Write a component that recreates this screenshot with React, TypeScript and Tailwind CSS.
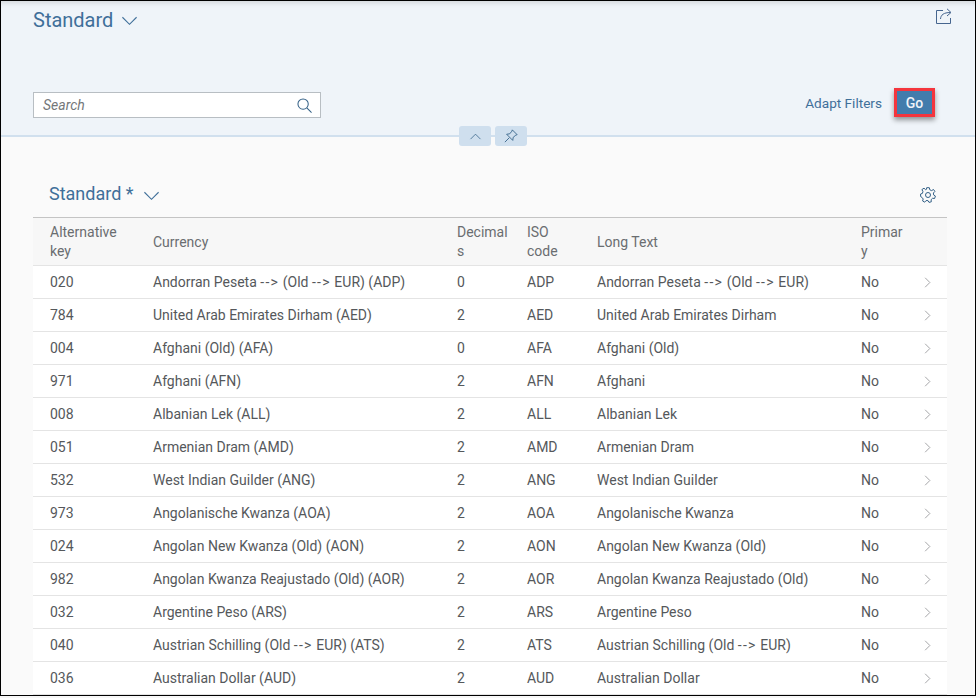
import { Fragment } from "react";

const rows = [
  ["020", "Andorran Peseta --> (Old --> EUR) (ADP)", "0", "ADP", "Andorran Peseta --> (Old --> EUR)"],
  ["784", "United Arab Emirates Dirham (AED)", "2", "AED", "United Arab Emirates Dirham"],
  ["004", "Afghani (Old) (AFA)", "0", "AFA", "Afghani (Old)"],
  ["971", "Afghani (AFN)", "2", "AFN", "Afghani"],
  ["008", "Albanian Lek (ALL)", "2", "ALL", "Albanian Lek"],
  ["051", "Armenian Dram (AMD)", "2", "AMD", "Armenian Dram"],
  ["532", "West Indian Guilder (ANG)", "2", "ANG", "West Indian Guilder"],
  ["973", "Angolanische Kwanza (AOA)", "2", "AOA", "Angolanische Kwanza"],
  ["024", "Angolan New Kwanza (Old) (AON)", "2", "AON", "Angolan New Kwanza (Old)"],
  ["982", "Angolan Kwanza Reajustado (Old) (AOR)", "2", "AOR", "Angolan Kwanza Reajustado (Old)"],
  ["032", "Argentine Peso (ARS)", "2", "ARS", "Argentine Peso"],
  ["040", "Austrian Schilling (Old --> EUR) (ATS)", "2", "ATS", "Austrian Schilling (Old --> EUR)"],
  ["036", "Australian Dollar (AUD)", "2", "AUD", "Australian Dollar"],
];

const gridCols = "grid grid-cols-[103px_304px_70px_70px_264px_58px_1fr] pl-[17px]";

const Chevron = ({ className }: { className: string }) => (
  <svg viewBox="0 0 20 12" fill="none" stroke="currentColor" strokeWidth="1.3" className={className}>
    <path d="M1.5 1.5 L10 10 L18.5 1.5" />
  </svg>
);

// the arrows run wider in the original font
const CellText = ({ text }: { text: string }) => (
  <>
    {text.split("-->").map((part, i) => (
      <Fragment key={i}>
        {i > 0 && <span className="tracking-[1.3px]">{"-->"}</span>}
        {part}
      </Fragment>
    ))}
  </>
);

const App = () => (
  <div className="h-[698px] w-[980px] overflow-hidden bg-[#f7f7f7] font-['Roboto',sans-serif]">
    <div className="relative flex h-[696px] w-[976px] flex-col overflow-hidden border border-black bg-[#fafafa]">
      <header className="flex h-[136px] shrink-0 flex-col justify-between border-b-2 border-[#d1e0ee] bg-[#eff4f9] pb-[17px] pl-8 pr-10 shadow-[inset_0_6px_5px_-4px_rgba(0,0,0,0.12)]">
        <div className="flex items-start justify-between">
          <div className="mt-[6px] flex items-center gap-2 text-[#3f6f99]">
            <span className="text-[20px] leading-[26px]">Standard</span>
            <Chevron className="mt-[1px] h-[10px] w-[17px]" />
          </div>
          <svg viewBox="0 0 16 16" fill="none" stroke="#46658f" strokeWidth="1" className="mr-[-17px] mt-[7px] h-4 w-4">
            <path d="M7 2.5 H0.5 V15.5 H14.5 V10" />
            <path d="M4.5 11 C4.8 7 7.5 4.5 14.5 4.5" />
            <path d="M11 0.8 L15 4.5 L11 8" />
          </svg>
        </div>
        <div className="flex items-end justify-between">
          <div className="flex h-[26px] w-[288px] items-center justify-between border border-[#b8bec3] bg-white pl-[9px] pr-[8px]">
            <span className="text-[14px] italic text-[#74777a]">Search</span>
            <svg viewBox="0 0 16 16" fill="none" stroke="#346187" strokeWidth="1.1" className="h-[15px] w-[15px]">
              <circle cx="6.5" cy="6.5" r="5.5" />
              <path d="M10.5 10.5 L15.5 15.5" />
            </svg>
          </div>
          <div className="mb-[1px] flex items-center gap-[12px]">
            <span className="pt-[1px] text-[13.6px] text-[#3f6f99]">Adapt Filters</span>
            <button className="flex h-[29px] w-[41px] items-center justify-center border-[3px] border-[#f4353d] bg-[#427cac] pt-[1px] text-[14px] font-medium text-[#f0f4f8] shadow-[0_3px_5px_rgba(0,0,0,0.4)]">
              Go
            </button>
          </div>
        </div>
      </header>

      <div className="absolute left-[458px] top-[125px] flex gap-[4px]">
        <div className="flex h-[20px] w-[32px] items-center justify-center rounded-[3px] bg-[#cfdfee]">
          <Chevron className="h-[7px] w-[13px] rotate-180 text-[#346187]" />
        </div>
        <div className="flex h-[20px] w-[32px] items-center justify-center rounded-[3px] bg-[#cfdfee]">
          <svg viewBox="0 0 16 16" fill="none" stroke="#346187" strokeWidth="1" className="h-[14px] w-[14px]">
            <path d="M9.5 1 L15 6.5 L13.5 7 L10.5 9.5 L10 13 L3 6 L6.5 5.5 L9 2.5 Z" />
            <path d="M6 10 L1 15" />
          </svg>
        </div>
      </div>

      <main className="flex min-h-0 flex-1 flex-col pl-8 pr-[28px]">
        <div className="flex h-[80px] shrink-0 items-end justify-between pb-[11px] pl-[16px] pr-[11px]">
          <div className="flex items-center gap-[9px] text-[#3f6f99]">
            <span className="text-[18px] leading-[24px]">Standard *</span>
            <Chevron className="mt-[3px] h-[10px] w-[17px]" />
          </div>
          <svg viewBox="0 0 16 16" fill="none" stroke="#346187" strokeWidth="1" className="mb-[3px] h-[16px] w-[16px]">
            <circle cx="8" cy="8" r="2.5" />
            <path d="M6.7 0.7 H9.3 L9.8 2.8 L11.6 3.6 L13.5 2.5 L14.9 4.4 L13.4 6 L13.6 7.9 L15.4 9 L14.6 11.5 L12.5 11.3 L11.1 12.7 L11.3 14.8 L9 15.4 L8 13.6 L6 13.6 L4.7 15.2 L2.6 14 L3.2 12 L2.1 10.5 L0.6 9.5 L0.6 7 L2.5 6.3 L2.9 4.4 L1.9 2.6 L4 1.2 L5.6 2.7 L6.4 2.4 Z" />
          </svg>
        </div>

        <div className={`${gridCols} h-[49px] shrink-0 items-center border-y border-t-[#c4c4c4] border-b-[#e4e4e4] bg-[#f7f7f7] pt-[1px] text-[14px] leading-[19px] text-[#6a6d70]`}>
          <div className="w-[80px]">Alternative key</div>
          <div>Currency</div>
          <div className="w-[52px] break-all">Decimals</div>
          <div className="w-[40px]">ISO code</div>
          <div>Long Text</div>
          <div className="w-[44px] break-all">Primary</div>
          <div />
        </div>

        {rows.map((row) => (
          <div
            key={row[0]}
            className={`${gridCols} h-[33px] shrink-0 items-center border-b border-[#e4e4e4] bg-white pt-[1px] text-[14px] text-[#55585b]`}
          >
            <div>{row[0]}</div>
            <div><CellText text={row[1]} /></div>
            <div>{row[2]}</div>
            <div>{row[3]}</div>
            <div><CellText text={row[4]} /></div>
            <div>No</div>
            <svg viewBox="0 0 8 14" fill="none" stroke="#8c8e90" strokeWidth="1" className="ml-[5px] h-[11px] w-[7px]">
              <path d="M1 1 L7 7 L1 13" />
            </svg>
          </div>
        ))}
      </main>
    </div>
  </div>
);

export default App;
